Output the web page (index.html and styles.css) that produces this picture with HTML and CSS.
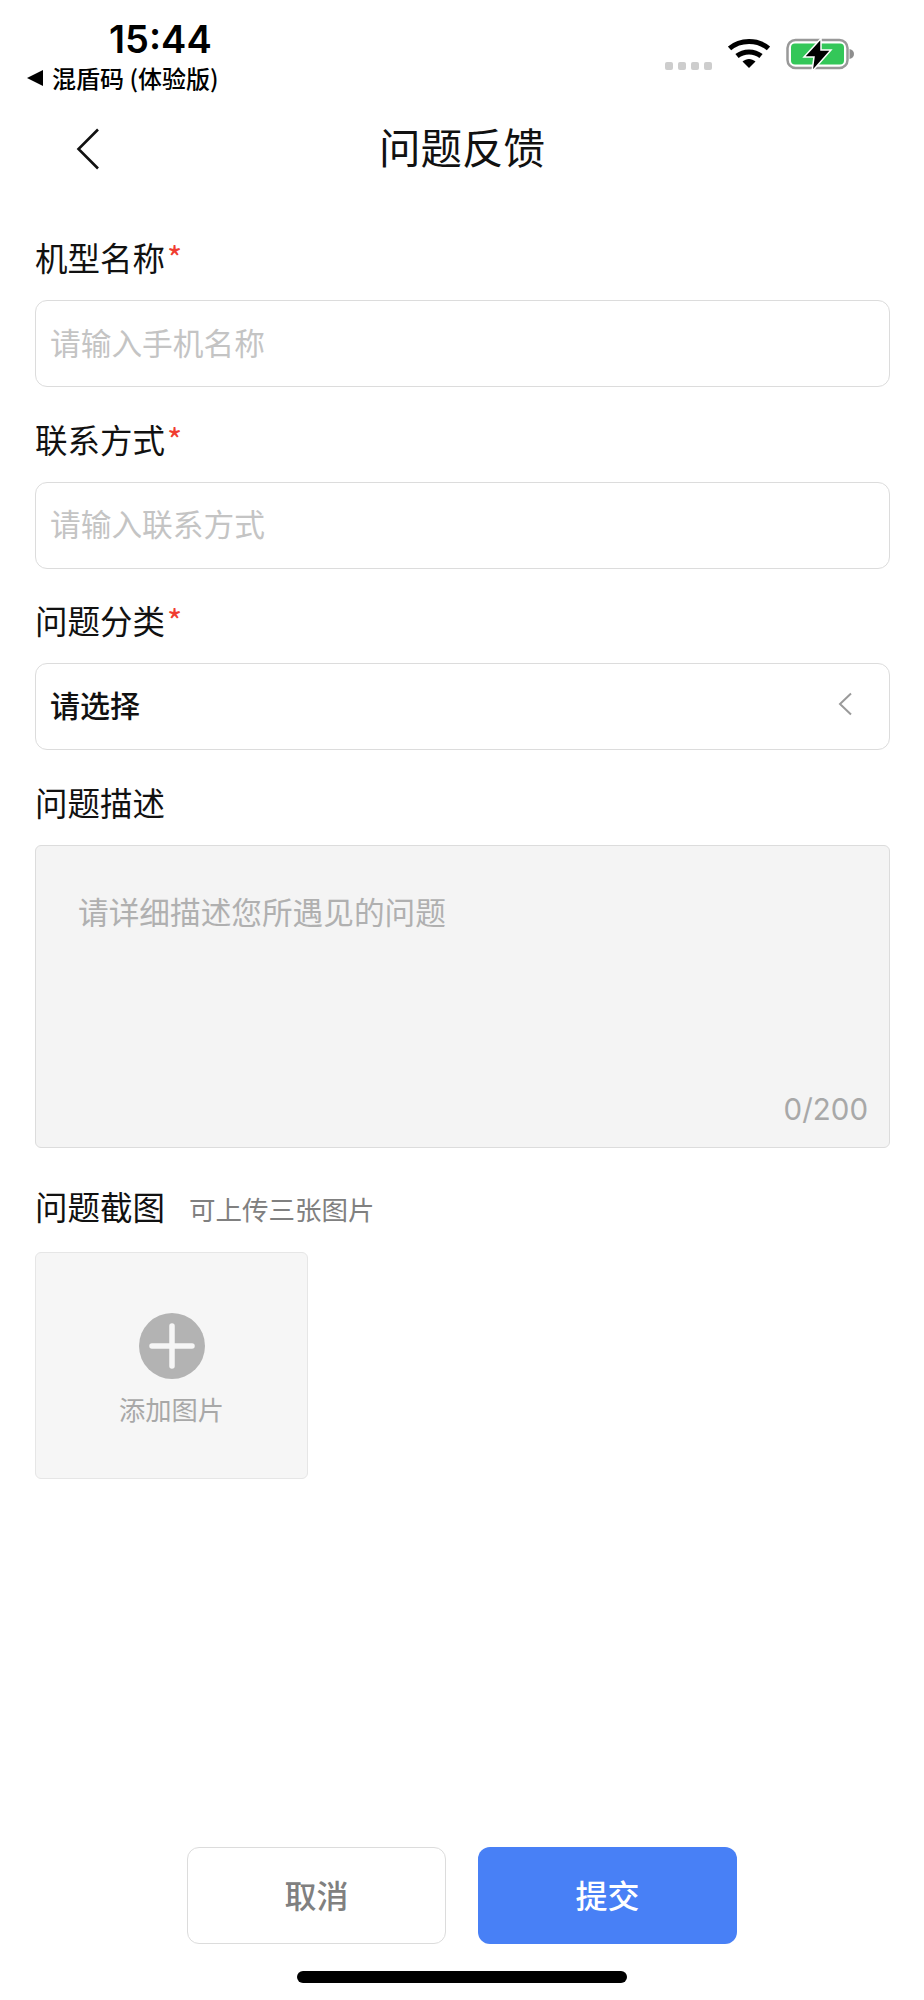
FILE: index.html
```html
<!DOCTYPE html>
<html lang="zh-CN">
<head>
    <meta charset="UTF-8">
    <meta name="viewport" content="width=device-width, initial-scale=1.0">
    <title>问题反馈</title>
    <link rel="stylesheet" href="styles.css">
</head>
<body>
    <div class="page">
        <div class="status-bar">
            <div class="status-left">
                <div class="time">15:44</div>
                <div class="back-app"><span class="back-arrow"></span>混盾码 (体验版)</div>
            </div>
            <div class="status-right">
                <div class="signal"><i></i><i></i><i></i><i></i></div>
                <svg class="wifi" width="42" height="30" viewBox="0 0 42 30">
                    <path d="M1.500 10.500C12 1 30 1 40.500 10.500" fill="none" stroke="#000" stroke-width="5"/>
                    <path d="M9 18C15.500 12.500 26.500 12.500 33 18" fill="none" stroke="#000" stroke-width="5"/>
                    <path d="M14.500 23.500C18.500 20 23.500 20 27.500 23.500L21 30Z" fill="#000"/>
                </svg>
                <svg class="battery" width="70" height="34" viewBox="0 0 70 34">
                    <rect x="1.500" y="2" width="60" height="28" rx="8" fill="none" stroke="#999" stroke-width="2.500"/>
                    <rect x="5" y="5.500" width="53" height="21" rx="4" fill="#34c759"/>
                    <path d="M63.500 11c3 .5 4.500 2.500 4.500 5s-1.500 4.500-4.500 5z" fill="#8e8e8e"/>
                    <path d="M35 .5L18 19H28L26 33.500L45 12H35Z" fill="#000" stroke="#fff" stroke-width="1.500"/>
                </svg>
            </div>
        </div>

        <div class="nav-bar">
            <svg class="nav-back" width="24" height="42" viewBox="0 0 24 42">
                <path d="M22 1.500L2.500 21L22 40.500" fill="none" stroke="#111" stroke-width="2.600"/>
            </svg>
            <h1>问题反馈</h1>
        </div>

        <form class="form">
            <div class="label">机型名称<span class="req">*</span></div>
            <div class="field placeholder">请输入手机名称</div>

            <div class="label">联系方式<span class="req">*</span></div>
            <div class="field placeholder">请输入联系方式</div>

            <div class="label">问题分类<span class="req">*</span></div>
            <div class="field select">
                <span>请选择</span>
                <svg width="14" height="24" viewBox="0 0 14 24">
                    <path d="M13 1.500L2 12L13 22.500" fill="none" stroke="#9a9a9a" stroke-width="2"/>
                </svg>
            </div>

            <div class="label">问题描述</div>
            <div class="textarea">
                <div class="textarea-hint">请详细描述您所遇见的问题</div>
                <div class="count">0/200</div>
            </div>

            <div class="label label-shot">问题截图<span class="sub">可上传三张图片</span></div>
            <div class="upload">
                <svg width="66" height="66" viewBox="0 0 66 66">
                    <circle cx="33" cy="33" r="33" fill="#b3b3b3"/>
                    <path d="M33 13V53M13 33H53" stroke="#f6f6f6" stroke-width="5.500" stroke-linecap="round"/>
                </svg>
                <div class="upload-text">添加图片</div>
            </div>
        </form>

        <div class="actions">
            <div class="btn btn-cancel">取消</div>
            <div class="btn btn-submit">提交</div>
        </div>
        <div class="home-bar"></div>
    </div>
</body>
</html>
```

FILE: styles.css
```css
* {
    box-sizing: border-box;
}
body {
    margin: 0;
    background: #fff;
    font-family: "Noto Sans CJK SC", "Noto Sans", sans-serif;
    color: #111;
}
.page {
    width: 924px;
    height: 2000px;
    display: flex;
    flex-direction: column;
    overflow: hidden;
}
.status-bar {
    height: 100px;
    display: flex;
    justify-content: space-between;
}
.status-left {
    padding: 17px 0 0 27px;
}
.time {
    font-family: Inter, "Liberation Sans", sans-serif;
    font-size: 38px;
    font-weight: 600;
    line-height: 45px;
    color: #000;
    margin-left: 82px;
}
.back-app {
    display: flex;
    align-items: center;
    font-size: 24px;
    font-weight: 500;
    line-height: 34px;
    margin-top: -1px;
    color: #000;
    white-space: nowrap;
}
.back-arrow {
    width: 0;
    height: 0;
    border-top: 8px solid transparent;
    border-bottom: 8px solid transparent;
    border-right: 16px solid #000;
    margin-right: 9px;
}
.status-right {
    display: flex;
    align-items: flex-start;
    padding: 38px 68px 0 0;
}
.signal {
    display: flex;
    gap: 5px;
    margin: 24px 16px 0 0;
}
.signal i {
    width: 8px;
    height: 8px;
    border-radius: 2px;
    background: #cdcdcd;
}
.wifi {
    margin-right: 16px;
}
.nav-bar {
    height: 92px;
    padding-bottom: 1px;
    position: relative;
    display: flex;
    justify-content: center;
    align-items: center;
}
.nav-back {
    position: absolute;
    left: 76px;
    top: 28px;
}
h1 {
    margin: 0;
    font-size: 41.500px;
    font-weight: 400;
    line-height: 48px;
}
.form {
    padding: 42px 34px 0 35px;
    display: flex;
    flex-direction: column;
    align-items: flex-start;
}
.label {
    font-size: 32.500px;
    line-height: 48px;
    height: 48px;
    margin-top: -1px;
    margin-bottom: 19px;
    white-space: nowrap;
}
.label-shot {
    margin-bottom: 21.500px;
}
.req {
    color: #f03c30;
    margin-left: 2px;
}
.field {
    width: 855px;
    height: 87px;
    border: 1.500px solid #dcdcdc;
    border-radius: 12px;
    padding: 0 14px 5px;
    display: flex;
    align-items: center;
    font-size: 30.700px;
    margin-bottom: 28.500px;
}
.placeholder {
    color: #c4c4c4;
}
.select {
    justify-content: space-between;
    font-weight: 500;
    color: #111;
    font-size: 30px;
    padding-right: 37px;
}
.textarea {
    width: 855px;
    height: 303px;
    border: 1.500px solid #dcdcdc;
    border-radius: 6px;
    background: #f4f4f4;
    padding: 42px 21px 20px 42px;
    display: flex;
    flex-direction: column;
    justify-content: space-between;
    margin-bottom: 35.500px;
}
.textarea-hint {
    font-size: 30.670px;
    line-height: 46px;
    color: #b0b0b0;
}
.count {
    font-family: Inter, "Liberation Sans", sans-serif;
    font-size: 29.500px;
    line-height: 36px;
    color: #a8a8a8;
    text-align: right;
}
.sub {
    font-size: 26.500px;
    color: #808080;
    margin-left: 24px;
}
.upload {
    width: 273px;
    height: 227px;
    border: 1.500px solid #e6e6e6;
    border-radius: 6px;
    background: #f6f6f6;
    display: flex;
    flex-direction: column;
    align-items: center;
    padding-top: 60px;
}
.upload-text {
    font-size: 26.300px;
    line-height: 36px;
    margin-top: 12px;
    color: #a8a8a8;
}
.actions {
    display: flex;
    justify-content: center;
    gap: 32px;
    margin-top: auto;
}
.btn {
    width: 259px;
    height: 97px;
    border-radius: 12px;
    display: flex;
    align-items: center;
    justify-content: center;
    padding-bottom: 4px;
    font-size: 32px;
    font-weight: 500;
}
.btn-cancel {
    border: 1.500px solid #dcdcdc;
    color: #808080;
}
.btn-submit {
    background: #4880f6;
    color: #fff;
}
.home-bar {
    width: 330px;
    height: 12px;
    border-radius: 6px;
    background: #000;
    margin: 27px auto 17px;
}
```
